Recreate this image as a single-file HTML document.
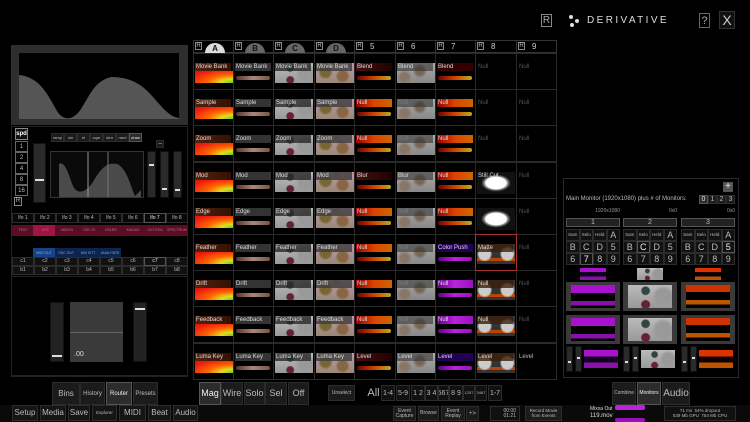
<!DOCTYPE html>
<html><head><meta charset="utf-8">
<style>
*{margin:0;padding:0;box-sizing:border-box}
body{width:750px;height:422px;background:#000;overflow:hidden;position:relative;font-family:"Liberation Sans",sans-serif;color:#bbb}
.a{position:absolute}
.b{position:absolute;background:#1b1b1b;border:1px solid #2c2c2c;color:#bbb;display:flex;align-items:center;justify-content:center;text-align:center;line-height:1;white-space:nowrap;overflow:hidden}
.h{background:#2c2c2c;border-color:#555;color:#eee}
.cell{position:absolute;border:1px solid #2a2a2a;overflow:hidden}
.lab{position:absolute;left:1px;top:9px;height:8px;width:36px;font-size:6px;line-height:8px;padding-left:1px;color:#ddd;white-space:nowrap;z-index:1}
.img{position:absolute;left:1px;top:17px;width:38px;height:12px}
.big{position:absolute;left:1px;top:9px;width:38px;height:20px}
.strip{position:absolute;left:2px;top:22px;width:34px;height:4px;border-radius:2px}
.sl{position:absolute;background:#2a2a2a;border:1px solid #111}
.sl i{position:absolute;left:1px;right:1px;height:2px;background:#ddd}
</style></head><body>

<div class="a" style="left:541px;top:14px;width:11px;height:13px;border:1px solid #888;font-size:10px;color:#aaa;text-align:center;line-height:11px">R</div>
<svg class="a" style="left:567px;top:14px" width="14" height="14"><circle cx="4" cy="3" r="2" fill="#ddd"/><circle cx="10" cy="7" r="2" fill="#ddd"/><circle cx="5" cy="11" r="2" fill="#ddd"/></svg>
<div class="a" style="left:587px;top:15px;font-size:10px;letter-spacing:2.4px;color:#ddd">DERIVATIVE</div>
<div class="a" style="left:699px;top:13px;width:11px;height:15px;border:1px solid #666;font-size:11px;color:#aaa;text-align:center;line-height:14px">?</div>
<div class="a" style="left:719px;top:11px;width:16px;height:18px;border:1px solid #333;background:#111;font-size:14px;color:#ccc;text-align:center;line-height:17px">X</div>

<div class="a" style="left:11px;top:45px;width:177px;height:80px;background:#2e2e2e"></div>
<svg class="a" style="left:19px;top:53px" width="160" height="66"><rect width="160" height="66" fill="#000"/>
<path d="M0 22 C20 24 28 40 38 58 C44 68 54 68 62 56 C72 40 76 28 92 24 C110 24 122 30 134 44 C146 58 152 64 160 65 L160 66 L0 66Z" fill="#555"/></svg>

<div class="a" style="left:11px;top:126px;width:177px;height:250px;border:1px solid #222"></div>
<div class="sl" style="left:33px;top:143px;width:13px;height:60px"><i style="top:35px"></i></div>
<div class="a" style="left:50px;top:151px;width:94px;height:47px;background:#0a0a0a;border:1px solid #333"></div>
<svg class="a" style="left:51px;top:152px" width="92" height="45"><path d="M8 45 L8 12 C14 8 18 24 22 34 C26 42 34 42 42 30 C50 16 56 10 66 12 C76 16 80 36 84 44 L90 38 L90 45Z" fill="#4a4a4a"/><line x1="37" y1="0" x2="37" y2="45" stroke="#999"/><line x1="57" y1="0" x2="57" y2="45" stroke="#777"/></svg>
<div class="b" style="left:156px;top:140px;width:8px;height:8px;font-size:7px">−</div>
<div class="sl" style="left:147px;top:151px;width:9px;height:47px"><i style="top:12px"></i></div>
<div class="sl" style="left:160px;top:151px;width:9px;height:47px"><i style="top:36px"></i></div>
<div class="sl" style="left:173px;top:151px;width:9px;height:47px"><i style="top:37px"></i></div>
<div class="a" style="left:14px;top:197px;width:8px;height:9px;border:1px solid #888;font-size:6px;line-height:7px;text-align:center">R</div>
<div class="a" style="left:11px;top:225px;width:177px;height:11px;background:#5a0e24"></div>
<div class="a" style="left:33px;top:225px;width:22px;height:11px;background:#a01444"></div>
<div class="a" style="left:33px;top:248px;width:88px;height:11px;background:#0b2450"></div>
<div class="a" style="left:33px;top:248px;width:22px;height:11px;background:#16428a"></div>
<div class="a" style="left:11px;top:276px;width:177px;height:101px;border:1px solid #222"></div>
<div class="sl" style="left:50px;top:302px;width:14px;height:60px;background:#222"><i style="top:52px"></i></div>
<div class="a" style="left:70px;top:302px;width:53px;height:60px;background:#3a3a3a"><div class="a" style="left:0;right:0;top:30px;height:1px;background:#666"></div><div class="a" style="left:4px;top:49px;font-size:7px;color:#ddd">.00</div></div>
<div class="sl" style="left:133px;top:302px;width:14px;height:60px;background:#222"><i style="top:5px"></i></div>

<div class="a" style="left:563px;top:178px;width:176px;height:200px;border:1px solid #2a2a2a"></div>
<div class="b h" style="left:723px;top:182px;width:10px;height:10px;font-size:10px;background:#555">+</div>
<div class="a" style="left:566px;top:196px;font-size:6px;color:#bbb">Main Monitor (1920x1080) plus # of Monitors:</div>

<script>
function add(h){document.body.insertAdjacentHTML('beforeend',h)}
function B(x,y,w,h,t,fs,hl,st){add(`<div class="b${hl?' h':''}" style="left:${x}px;top:${y}px;width:${w}px;height:${h}px;font-size:${fs}px;${st||''}">${t}</div>`)}
B(15,128,13,12,'spd',6,1,'background:#111;border-color:#888;color:#fff;font-weight:bold');
['1','2','4','8','16'].forEach((t,i)=>B(15,141+i*11,13,11,t,6,0,'background:#000;border-color:#666'));
['ramp','sin','tri','sqar','stra','rand','draw'].forEach((t,i)=>B(51+i*13,133,13,9,t,4,i==6));
for(let i=0;i<8;i++)B(12+i*22,213,22,10,'lfo '+(i+1),5,i==6,'background:#080808');
['TEST','LFO','MIDI IN','OSC IN','KELER','KADIAS','OXYGEN','SPECTRUM'].forEach((t,i)=>add(`<div class="a" style="left:${12+i*22}px;top:228px;width:22px;font-size:3.5px;color:#c68;text-align:center">${t}</div>`));
['MIDI OUT','OSC OUT','MIX SIT7','ANALYSER'].forEach((t,i)=>add(`<div class="a" style="left:${33+i*22}px;top:251px;width:22px;font-size:3.5px;color:#8ac;text-align:center">${t}</div>`));
for(let i=0;i<8;i++){B(12+i*22,257,22,9,'c'+(i+1),5,i==6,'background:#111');B(12+i*22,266,22,9,'b'+(i+1),5,0,'background:#111')}
const X=[193,233,273,314,354,395,435,475,516,556];
const hdr=['A','B','C','D','5','6','7','8','9'];
hdr.forEach((t,i)=>{let x=X[i];add(`<div class="cell" style="left:${x}px;top:40px;width:${X[i+1]-x+1}px;height:13px;border-color:#333"></div><div class="a" style="left:${x+2}px;top:42px;width:7px;height:8px;border:1px solid #888;font-size:6px;line-height:6px;text-align:center">R</div>`);
 if(i<4)add(`<div class="a" style="left:${x+12}px;top:43px;width:20px;height:10px;border-radius:10px 10px 0 0;background:${i==0?'#ddd':'#666'};color:#111;font-size:8px;text-align:center;line-height:11px;font-weight:bold">${t}</div>`);
 else add(`<div class="a" style="left:${x+16}px;top:42px;font-size:8px;color:#ccc">${t}</div>`)});
const rows=['Movie Bank','Sample','Zoom','Mod','Edge','Feather','Drift','Feedback','Luma Key'];
const c5=['Blend','Null','Null','Blur','Null','Null','Null','Null','Level'];
const c7=['Blend','Null','Null','Null','Null','Color Push','Null','Null','Level'];
const gA='radial-gradient(ellipse at 100% 100%,#6c2 0%,#dd2 22%,#f60 48%,#e21 80%,#d10 100%)';
const gC='radial-gradient(circle at 40% 25%,#344 0 12%,transparent 15%),radial-gradient(circle at 40% 85%,#623 0 12%,transparent 15%),radial-gradient(circle at 80% 50%,#999 0 20%,transparent 30%),linear-gradient(#bbb,#999)';
const gD='radial-gradient(circle at 25% 45%,#763 0 16%,transparent 24%),radial-gradient(circle at 70% 65%,#864 0 16%,transparent 24%),radial-gradient(circle at 55% 20%,#a87 0 12%,transparent 20%),linear-gradient(#b9a,#987)';
const g6='radial-gradient(circle at 60% 40%,#765 0 15%,transparent 28%),radial-gradient(circle at 20% 70%,#876 0 12%,transparent 22%),linear-gradient(#aaa,#888)';
const red='linear-gradient(90deg,#900,#d40,#c60)',pur='linear-gradient(90deg,#608,#b2d,#91b)';
const strp='linear-gradient(90deg,#700,#c40,#ba2)';
const gM='radial-gradient(ellipse at 50% 50%,#fff 0 38%,#888 44%,transparent 55%),#111';
for(let r=0;r<9;r++){const y=53+r*36.2;
 for(let c=0;c<9;c++){const x=X[c];let w=X[c+1]-x+1,inner='';
  if(c==0)inner=`<div class="lab" style="background:linear-gradient(90deg,#521,#310)">${rows[r]}</div><div class="img" style="background:${gA}"></div>`;
  else if(c==1)inner=`<div class="lab" style="background:#333">${rows[r]}</div><div class="strip" style="background:linear-gradient(90deg,#533,#a87,#754)"></div>`;
  else if(c==2)inner=`<div class="lab" style="background:rgba(40,40,40,.8)">${rows[r]}</div><div class="big" style="background:${gC}"></div>`;
  else if(c==3)inner=`<div class="lab" style="background:rgba(60,60,60,.8)">${rows[r]}</div><div class="big" style="background:${gD}"></div>`;
  else if(c==4){const n=c5[r]=='Null';inner=`<div class="lab" style="background:${n?red:'linear-gradient(90deg,#411,#200)'}">${c5[r]}</div><div class="strip" style="background:${strp}"></div>`}
  else if(c==5)inner=`<div class="lab" style="background:rgba(50,50,50,.6);color:${c5[r]=='Null'?'#777':'#ddd'}">${c5[r]}</div><div class="big" style="background:${g6}"></div>`;
  else if(c==6){const p=r>=5,n=c7[r]=='Null';inner=`<div class="lab" style="background:${n?(p?pur:red):(p?'#205':'#300')}">${c7[r]}</div><div class="strip" style="background:${p?pur:strp}"></div>`}
  else if(c==7){if(r<3)inner=`<div class="lab" style="color:#555">Null</div>`;else if(r<5)inner=`<div class="lab">${r==3?'Still Cut':''}</div><div class="big" style="top:9px;height:22px;background:${gM}"></div>`;else inner=`<div class="lab" style="background:rgba(60,30,10,.8)">${['','','','','','Matte','Null','Null','Level'][r]}</div><div class="big" style="background:radial-gradient(circle at 20% 50%,#ccc 0 18%,transparent 24%),radial-gradient(circle at 80% 50%,#ccc 0 18%,transparent 24%),linear-gradient(transparent 70%,#b40 70%,#b40 85%,transparent 85%),#333"></div>`}
  else inner=`<div class="lab" style="color:${r==8?'#bbb':'#555'}">${r==8?'Level':'Null'}</div>`;
  add(`<div class="cell" style="left:${x}px;top:${y}px;width:${w}px;height:37px;${c==7&&r==5?'border-color:#a33;z-index:2':''}">${inner}</div>`)}}
['0','1','2','3'].forEach((t,i)=>B(699+i*9,195,9,9,t,7,i==0));
const RX=[566,623,681],res=['1920x1080','0x0','0x0'];
RX.forEach((x,k)=>{add(`<div class="a" style="left:${x}px;top:208px;width:54px;text-align:right;font-size:5px;color:#999">${res[k]}</div>`);
 B(x,218,54,9,''+(k+1),7,0,'background:#222;border-color:#555');
 const g=[['Sam','Selo','Held','A'],['B','C','D','5'],['6','7','8','9']];
 const hl=[[2,1],[1,1],[1,3]][k];
 g.forEach((row,ri)=>row.forEach((t,ci)=>B(x+ci*13.5,229+ri*12,13.5,12,t,t.length>1?4.5:9,ri==hl[0]&&ci==hl[1],'background:#111')));
 const im=['linear-gradient(#a1c 0 35%,#102 35% 70%,#81a 70%)',gC,'linear-gradient(#d30 0 35%,#100 35% 70%,#b50 70%)'][k];
 add(`<div class="a" style="left:${x+14}px;top:268px;width:26px;height:12px;background:${im}"></div>`);
 for(let j=0;j<2;j++)add(`<div class="a" style="left:${x}px;top:${282+j*33}px;width:54px;height:29px;background:#3a3a3a"><div class="a" style="left:5px;top:3px;width:44px;height:23px;background:${k==1?gC:(k==0?'linear-gradient(#a1c 0 35%,#000 35% 70%,#81a 70% 90%,#000 90%)':'linear-gradient(#c30 0 30%,#000 30% 65%,#b50 65% 85%,#000 85%)')}"></div></div>`);
 add(`<div class="sl" style="left:${x}px;top:346px;width:7px;height:26px"><i style="top:14px"></i></div><div class="sl" style="left:${x+9}px;top:346px;width:7px;height:26px"><i style="top:10px"></i></div><div class="a" style="left:${x+18}px;top:350px;width:34px;height:18px;background:${im}"></div>`)});
[['Bins',52,28],['History',80,25],['Router',106,26,1],['Presets',133,25]].forEach(a=>B(a[1],382,a[2],23,a[0],a[0].length>4?6:8,a[3]));
[['Mag',199,22,1],['Wire',221,22],['Solo',244,21],['Sel',265,22],['Off',288,21]].forEach(a=>B(a[1],382,a[2],23,a[0],9,a[3]));
B(328,385,27,16,'Unselect',5);
B(366,385,15,16,'All',11,0,'background:#000;border:none');
[['1-4',381,14],['5-9',396,14],['1 2',411,14],['3 4',425,13],['567',438,11],['8 9',449,14],['1257',463,12],['3467',475,12],['1-7',488,14]].forEach(a=>B(a[1],385,a[2],16,a[0],a[0].length>3?4:7,0,'background:#111'));
[['Combine',612,24],['Monitors',637,24,1],['Audio',662,28]].forEach(a=>B(a[1],382,a[2],23,a[0],a[0]=='Audio'?10:5,a[3]));
add('<div class="a" style="left:0;top:405px;width:750px;height:17px;background:#0a0a0a"></div>');
[['Setup',12,26],['Media',40,26],['Save',68,22],['Explorer',92,25],['MIDI',119,27],['Beat',148,23],['Audio',173,25]].forEach(a=>B(a[1],405,a[2],16,a[0],a[0]=='Explorer'?4.5:8,0,'background:#151515'));
B(393,406,23,15,'Event<br>Capture',5);B(418,406,21,15,'Browse',5);B(441,406,24,15,'Event<br>Replay',5);B(466,406,13,15,'+&gt;',6);
B(490,406,30,15,'<div style="text-align:right;width:100%;padding-right:3px">00:00<br>01:21</div>',5,0,'background:#111');
B(525,406,37,15,'Record Movie<br>from Events',4.5);
add('<div class="a" style="left:590px;top:406px;font-size:5px;color:#ddd;line-height:7px">Mixxa Out<br><span style="font-size:6px">119.mov</span></div><div class="a" style="left:615px;top:405px;width:30px;height:5px;background:#b2d;border-radius:2px"></div><div class="a" style="left:615px;top:418px;width:30px;height:4px;background:#91b;border-radius:2px"></div>');
B(664,406,72,15,'71 ms &nbsp;54% dropout<br>539 Mb GPU &nbsp;754 Mb CPU',4.5,0,'background:#111');
</script>
</body></html>
